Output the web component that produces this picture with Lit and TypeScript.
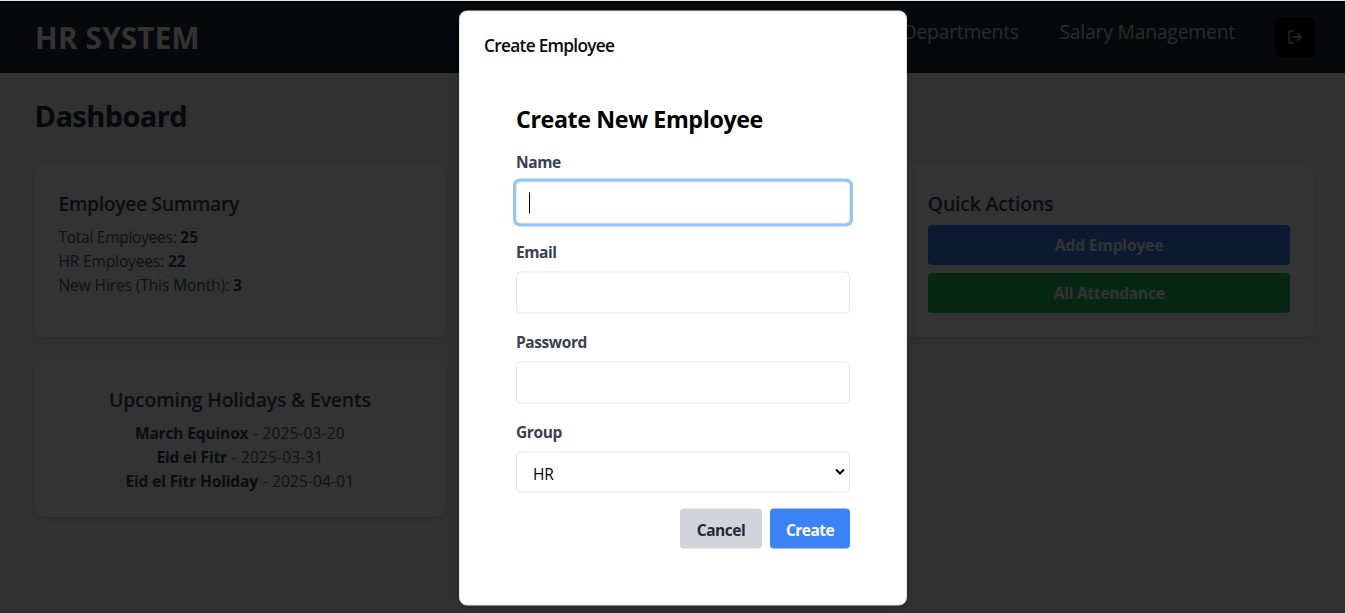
import { LitElement, html, css } from "lit";
import { customElement } from "lit/decorators.js";

@customElement("app-root")
export class AppRoot extends LitElement {
  static styles = css`
    :host {
      display: block;
      position: relative;
      box-sizing: border-box;
      height: 613px;
      overflow: hidden;
      padding-top: 1px;
      background: #dfe4e7;
      font-family: "Open Sans", "Noto Sans", sans-serif;
      font-size: 15.52px;
      line-height: 24px;
    }
    * {
      box-sizing: border-box;
      margin: 0;
    }
    b {
      font-weight: 700;
    }
    .page {
      height: 612px;
      background: #f3f4f6;
    }
    .header {
      height: 72px;
      padding: 16px 30px 16px 35px;
      background: #1f2937;
      color: #fff;
      display: flex;
      justify-content: space-between;
    }
    .brand {
      font-size: 29.6px;
      font-weight: 700;
      line-height: 42px;
      letter-spacing: 0.24px;
    }
    .nav {
      display: flex;
      gap: 40px;
      font-size: 19.4px;
      line-height: 30px;
      color: #d1d5db;
    }
    .nav-departments {
      letter-spacing: -0.3px;
      margin-right: 0.6px;
    }
    .nav-salary {
      letter-spacing: -0.24px;
    }
    .logout {
      width: 40px;
      height: 40px;
      border-radius: 6px;
      background: #000;
      display: grid;
      place-items: center;
      color: #d1d5db;
    }
    .main {
      padding: 24px 30.5px 0 34.5px;
    }
    .title {
      font-size: 29.1px;
      font-weight: 700;
      line-height: 38px;
      height: 36px;
      letter-spacing: -0.64px;
      color: #1f2937;
      margin-bottom: 32px;
    }
    .grid {
      display: grid;
      grid-template-columns: repeat(3, 1fr);
      gap: 24px;
    }
    .card {
      background: #fff;
      border-radius: 8px;
      padding: 24px;
      box-shadow: 0 4px 6px -1px rgba(0, 0, 0, 0.1), 0 2px 4px -2px rgba(0, 0, 0, 0.1);
      color: #4b5563;
    }
    .card h2 {
      font-size: 19.4px;
      font-weight: 600;
      height: 28px;
      line-height: 30px;
      margin-bottom: 8px;
      color: #374151;
    }
    .card b {
      color: #374151;
    }
    .summary h2 {
      letter-spacing: -0.37px;
    }
    .total {
      letter-spacing: -0.28px;
    }
    .staff {
      letter-spacing: -0.15px;
    }
    .hires {
      letter-spacing: -0.1px;
    }
    .summary b {
      letter-spacing: 0.12px;
    }
    .events {
      text-align: center;
      letter-spacing: 0.13px;
    }
    .events h2,
    .actions h2 {
      letter-spacing: -0.18px;
    }
    .events b {
      letter-spacing: -0.15px;
      margin-right: 0.6px;
    }
    .action {
      height: 40px;
      line-height: 40px;
      border-radius: 4px;
      text-align: center;
      font-weight: 700;
      color: #fff;
      background: #3b82f6;
      letter-spacing: -0.08px;
    }
    .action + .action {
      margin-top: 8px;
      background: #22c55e;
      letter-spacing: -0.24px;
    }
    .overlay {
      position: absolute;
      inset: 1px 0 0 0;
      background: rgba(0, 0, 0, 0.8);
    }
    .modal {
      position: absolute;
      left: 459px;
      top: 10px;
      width: 448px;
      height: 595px;
      transform: translateY(0.5px);
      padding: 24px;
      border: 1px solid #e5e7eb;
      border-radius: 8px;
      background: #fff;
      color: #0a0a0a;
      box-shadow: 0 10px 15px -3px rgba(0, 0, 0, 0.1), 0 4px 6px -4px rgba(0, 0, 0, 0.1);
    }
    .modal-title {
      font-size: 17.3px;
      font-weight: 600;
      height: 18px;
      line-height: 20px;
      letter-spacing: -0.72px;
      margin-bottom: 16px;
    }
    .form {
      padding: 32px;
    }
    .form h2 {
      font-size: 23.28px;
      font-weight: 700;
      height: 32px;
      line-height: 34px;
      letter-spacing: -0.4px;
      margin-bottom: 16px;
      color: #000;
    }
    .field {
      display: flex;
      flex-direction: column;
      gap: 8px;
      margin-bottom: 16px;
      position: relative;
    }
    .field label {
      font-weight: 700;
      color: #374151;
      letter-spacing: -0.42px;
    }
    .field input {
      width: 100%;
      height: 42px;
      border: 1px solid #e5e7eb;
      border-radius: 4px;
      padding: 8px 12px;
      background: #fff;
      outline: none;
      font: inherit;
    }
    .field .focused {
      box-shadow: 0 0 0 3px #93c5fd;
    }
    .caret {
      position: absolute;
      left: 13px;
      top: 43px;
      width: 1px;
      height: 21px;
      background: #000;
    }
    .field select {
      appearance: none;
      width: 100%;
      height: 41px;
      border: 1px solid #e5e7eb;
      border-radius: 4px;
      padding: 2px 16px 0;
      background: #fff;
      font: inherit;
      letter-spacing: -0.24px;
      color: #000;
    }
    .chevron {
      position: absolute;
      right: 4px;
      top: 47px;
    }
    .buttons {
      display: flex;
      justify-content: flex-end;
      gap: 8px;
    }
    .btn {
      height: 40px;
      line-height: 42px;
      border-radius: 4px;
      font-weight: 700;
      text-align: center;
      letter-spacing: -0.46px;
    }
    .cancel {
      width: 82px;
      background: #d1d5db;
      color: #1f2937;
    }
    .create {
      width: 80px;
      background: #3b82f6;
      color: #fff;
      letter-spacing: -0.55px;
    }
  `;

  render() {
    return html`
      <div class="page">
        <header class="header">
          <div class="brand">HR SYSTEM</div>
          <nav class="nav">
            <span class="nav-departments">Departments</span>
            <span class="nav-salary">Salary Management</span>
            <span class="logout">
              <svg width="16" height="16" viewBox="0 0 24 24" fill="none" stroke="currentColor" stroke-width="2" stroke-linecap="round" stroke-linejoin="round">
                <path d="M9 21H5a2 2 0 0 1-2-2V5a2 2 0 0 1 2-2h4" />
                <path d="M16 17l5-5-5-5" />
                <path d="M21 12H9" />
              </svg>
            </span>
          </nav>
        </header>
        <main class="main">
          <h1 class="title">Dashboard</h1>
          <div class="grid">
            <section class="card summary">
              <h2>Employee Summary</h2>
              <p class="total">Total Employees: <b>25</b></p>
              <p class="staff">HR Employees: <b>22</b></p>
              <p class="hires">New Hires (This Month): <b>3</b></p>
            </section>
            <section class="card"></section>
            <section class="card actions">
              <h2>Quick Actions</h2>
              <div class="action">Add Employee</div>
              <div class="action">All Attendance</div>
            </section>
            <section class="card events">
              <h2>Upcoming Holidays &amp; Events</h2>
              <p><b>March Equinox</b> - 2025-03-20</p>
              <p><b>Eid el Fitr</b> - 2025-03-31</p>
              <p><b>Eid el Fitr Holiday</b> - 2025-04-01</p>
            </section>
          </div>
        </main>
      </div>
      <div class="overlay"></div>
      <div class="modal">
        <div class="modal-title">Create Employee</div>
        <div class="form">
          <h2>Create New Employee</h2>
          <div class="field">
            <label>Name</label>
            <input class="focused" />
            <span class="caret"></span>
          </div>
          <div class="field">
            <label>Email</label>
            <input />
          </div>
          <div class="field">
            <label>Password</label>
            <input type="password" />
          </div>
          <div class="field">
            <label>Group</label>
            <select><option>HR</option></select>
            <svg class="chevron" width="12" height="10" viewBox="0 0 12 10" fill="none" stroke="#000" stroke-width="2">
              <path d="M2 3l4 4 4-4" />
            </svg>
          </div>
          <div class="buttons">
            <div class="btn cancel">Cancel</div>
            <div class="btn create">Create</div>
          </div>
        </div>
      </div>
    `;
  }
}
